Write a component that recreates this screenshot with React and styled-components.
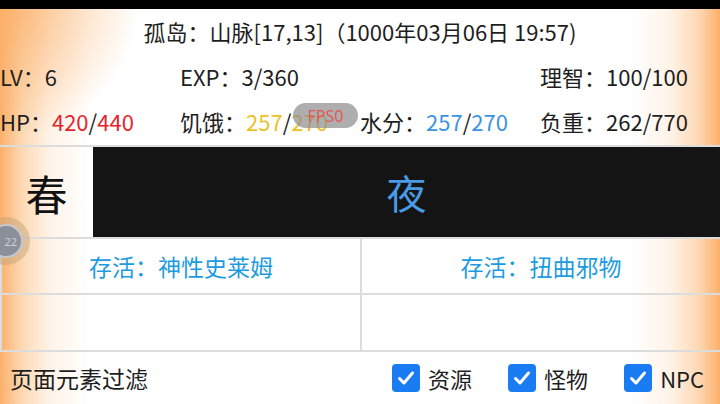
import React from "react"
import styled, { createGlobalStyle } from "styled-components"

const GlobalStyle = createGlobalStyle`
  html, body {
    margin: 0;
    padding: 0;
    background: #000;
  }
  body {
    font-family: "Noto Sans CJK SC", "Noto Sans", sans-serif;
    color: #222;
  }
`

const pageGlow = `
  radial-gradient(circle at 0 0, rgba(251, 176, 106, 0.85), rgba(251, 176, 106, 0) 140px),
  linear-gradient(
    to right,
    #fbb06a 0px,
    #fdd9b4 22px,
    #fff3e8 50px,
    #ffffff 90px,
    #ffffff 630px,
    #fff3e8 670px,
    #fdd9b4 698px,
    #fbb06a 720px
  )
`

const Screen = styled.div`
  position: relative;
  width: 720px;
  height: 404px;
  overflow: hidden;
  display: flex;
  flex-direction: column;
  background: #000;
`

const StatusBar = styled.div`
  height: 9px;
  background: #000;
  flex-shrink: 0;
`

const Page = styled.div`
  flex: 1;
  display: flex;
  flex-direction: column;
  background: ${pageGlow};
  background-attachment: fixed;
`

const Title = styled.div`
  height: 46px;
  display: flex;
  align-items: center;
  justify-content: center;
  font-size: 22px;
  padding-bottom: 2px;
  box-sizing: border-box;
  color: #1e1e1e;
`

const StatRow = styled.div`
  display: grid;
  grid-template-columns: repeat(4, 180px);
  height: ${({ $h }) => $h}px;
  align-items: center;
  font-size: 22px;
  color: #1e1e1e;
`

const Stat = styled.div`
  white-space: nowrap;
`

const Num = styled.span`
  color: ${({ $c }) => $c || "inherit"};
`

const Divider = styled.div`
  height: 2px;
  background: #dcdcdc;
  flex-shrink: 0;
`

const SeasonRow = styled.div`
  height: 90px;
  display: flex;
`

const Season = styled.div`
  width: 93px;
  display: flex;
  align-items: center;
  justify-content: center;
  font-size: 42px;
  color: #111;
`

const TimeOfDay = styled.div`
  flex: 1;
  background: #141414;
  display: flex;
  align-items: center;
  justify-content: center;
  font-size: 40px;
  color: #4a9ae6;
`

const CellGrid = styled.div`
  display: grid;
  grid-template-columns: 358px 358px;
  grid-template-rows: 54px 55px;
  column-gap: 2px;
  row-gap: 2px;
  background: #dcdcdc;
  border-left: 2px solid #dcdcdc;
  padding: 2px 0;
`

const Cell = styled.div`
  background: ${pageGlow};
  background-attachment: fixed;
  display: flex;
  align-items: center;
  justify-content: center;
  font-size: 23px;
  color: #1d9be0;
`

const FilterBar = styled.div`
  flex: 1;
  display: flex;
  align-items: center;
  padding: 0 16px 0 10px;
  font-size: 23px;
  color: #1e1e1e;
`

const FilterLabel = styled.div`
  flex: 1;
`

const Options = styled.div`
  display: flex;
  gap: 36px;
`

const Option = styled.label`
  display: flex;
  align-items: center;
  gap: 8px;
  font-size: 22px;
`

const Box = styled.span`
  width: 28px;
  height: 28px;
  border-radius: 4px;
  background: #1a7cf2;
  display: flex;
  align-items: center;
  justify-content: center;
`

const FpsBadge = styled.div`
  position: absolute;
  left: 293px;
  top: 103px;
  width: 65px;
  height: 25px;
  border-radius: 13px;
  background: rgba(140, 140, 140, 0.7);
  color: rgba(240, 70, 70, 0.85);
  font-family: "Noto Sans", sans-serif;
  font-size: 16px;
  display: flex;
  align-items: center;
  justify-content: center;
`

const FloatBall = styled.div`
  position: absolute;
  left: -18px;
  top: 217px;
  width: 48px;
  height: 48px;
  border-radius: 50%;
  background: rgba(190, 160, 120, 0.45);
  display: flex;
  align-items: center;
  justify-content: center;
`

const FloatCore = styled.div`
  width: 34px;
  height: 34px;
  border-radius: 50%;
  background: #8a8f99;
  border: 2px solid rgba(255, 255, 255, 0.5);
  color: rgba(255, 255, 255, 0.6);
  font-size: 11px;
  font-family: "Noto Sans", sans-serif;
  display: flex;
  align-items: center;
  justify-content: flex-end;
  padding-right: 4px;
  box-sizing: border-box;
`

const Check = () => (
  <Box>
    <svg width="20" height="20" viewBox="0 0 20 20">
      <path
        d="M3.5 10.5 L8 15 L16.5 5"
        fill="none"
        stroke="#fff"
        strokeWidth="3"
        strokeLinecap="round"
        strokeLinejoin="round"
      />
    </svg>
  </Box>
)

export default function App() {
  return (
    <Screen>
      <GlobalStyle />
      <StatusBar />
      <Page>
        <Title>孤岛：山脉[17,13]（1000年03月06日 19:57)</Title>
        <StatRow $h={42}>
          <Stat>LV：6</Stat>
          <Stat>EXP：3/360</Stat>
          <Stat />
          <Stat>理智：100/100</Stat>
        </StatRow>
        <StatRow $h={48}>
          <Stat>
            HP：<Num $c="#e5242a">420</Num>/<Num $c="#e5242a">440</Num>
          </Stat>
          <Stat>
            饥饿：<Num $c="#ecc128">257</Num>/<Num $c="#ecc128">270</Num>
          </Stat>
          <Stat>
            水分：<Num $c="#3b94e3">257</Num>/<Num $c="#3b94e3">270</Num>
          </Stat>
          <Stat>负重：262/770</Stat>
        </StatRow>
        <Divider />
        <SeasonRow>
          <Season>春</Season>
          <TimeOfDay>夜</TimeOfDay>
        </SeasonRow>
        <CellGrid>
          <Cell>存活：神性史莱姆</Cell>
          <Cell>存活：扭曲邪物</Cell>
          <Cell />
          <Cell />
        </CellGrid>
        <FilterBar>
          <FilterLabel>页面元素过滤</FilterLabel>
          <Options>
            <Option>
              <Check />
              资源
            </Option>
            <Option>
              <Check />
              怪物
            </Option>
            <Option>
              <Check />
              NPC
            </Option>
          </Options>
        </FilterBar>
      </Page>
      <FpsBadge>FPS0</FpsBadge>
      <FloatBall>
        <FloatCore>22</FloatCore>
      </FloatBall>
    </Screen>
  )
}
